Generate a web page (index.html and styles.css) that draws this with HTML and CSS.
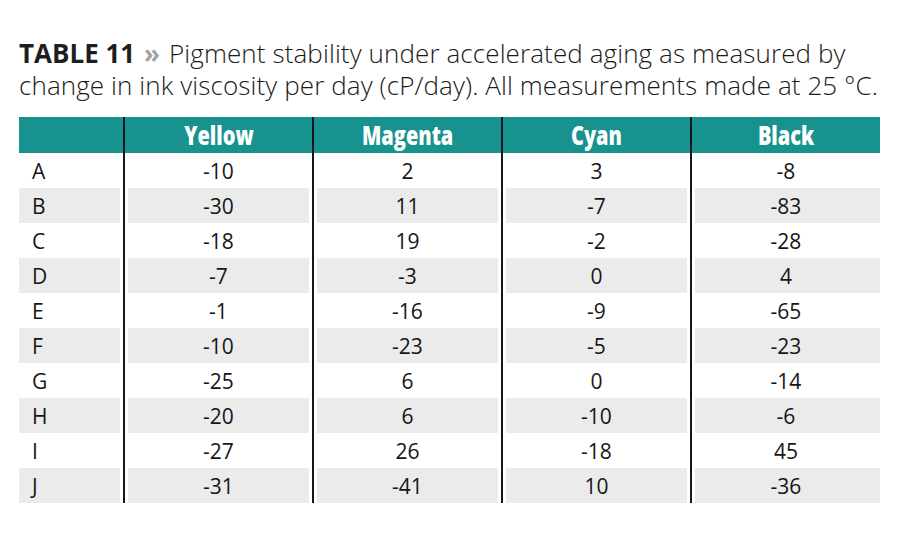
FILE: index.html
```html
<!DOCTYPE html>
<html>
<head>
<meta charset="utf-8">
<link rel="stylesheet" href="styles.css">
</head>
<body>
<div class="page">
  <p class="caption"><span class="label">TABLE 11</span> <span class="chev">»</span> Pigment stability under accelerated aging as measured by change in ink viscosity per day (cP/day). All measurements made at 25 °C.</p>
  <table class="data">
    <thead>
      <tr><th class="c0"></th><th><span class="hd">Yellow</span></th><th><span class="hd">Magenta</span></th><th><span class="hd">Cyan</span></th><th><span class="hd">Black</span></th></tr>
    </thead>
    <tbody>
      <tr><td class="c0">A</td><td>-10</td><td>2</td><td>3</td><td>-8</td></tr>
      <tr class="alt"><td class="c0">B</td><td>-30</td><td>11</td><td>-7</td><td>-83</td></tr>
      <tr><td class="c0">C</td><td>-18</td><td>19</td><td>-2</td><td>-28</td></tr>
      <tr class="alt"><td class="c0">D</td><td>-7</td><td>-3</td><td>0</td><td>4</td></tr>
      <tr><td class="c0">E</td><td>-1</td><td>-16</td><td>-9</td><td>-65</td></tr>
      <tr class="alt"><td class="c0">F</td><td>-10</td><td>-23</td><td>-5</td><td>-23</td></tr>
      <tr><td class="c0">G</td><td>-25</td><td>6</td><td>0</td><td>-14</td></tr>
      <tr class="alt"><td class="c0">H</td><td>-20</td><td>6</td><td>-10</td><td>-6</td></tr>
      <tr><td class="c0">I</td><td>-27</td><td>26</td><td>-18</td><td>45</td></tr>
      <tr class="alt"><td class="c0">J</td><td>-31</td><td>-41</td><td>10</td><td>-36</td></tr>
    </tbody>
  </table>
</div>
</body>
</html>
```
FILE: styles.css
```css
html, body {
  margin: 0;
  padding: 0;
  background: #ffffff;
}
.page {
  padding: 37px 10px 0 19px;
  font-family: "Open Sans", "Liberation Sans", sans-serif;
  color: #2a2a2a;
}
.caption {
  margin: 0 0 16px 0;
  font-size: 26px;
  font-weight: 300;
  line-height: 32px;
  letter-spacing: 0.1px;
  width: 871px;
  color: #1a1a1a;
}
.label {
  font-weight: 700;
  letter-spacing: 0;
  color: #1e1e1e;
}
.chev {
  color: #a3a3a3;
  font-weight: 700;
  margin: 0 2px;
}
.data {
  border-collapse: collapse;
  border-spacing: 0;
  width: 861px;
  table-layout: fixed;
}
.data th, .data td {
  padding: 0;
  text-align: center;
  border-left: 2px solid #15151f;
}
.data .c0 {
  width: 91px;
  border-left: none;
  text-align: left;
  padding-left: 13px;
}
.data th {
  height: 36px;
  background: #17928f;
  color: #ffffff;
  font-family: "Open Sans", sans-serif;
  font-weight: 800;
  font-size: 27px;
  line-height: 36px;
}
.hd {
  display: inline-block;
  transform: scaleX(0.74);
}
.data td {
  height: 35px;
  font-size: 21px;
  color: #161616;
}
.data tr.alt td {
  background: #ebebeb;
  box-shadow: inset 3px 0 0 #ffffff, inset -3px 0 0 #ffffff;
}
.data tr.alt td.c0 {
  box-shadow: inset -3px 0 0 #ffffff;
}
.data tr.alt td:last-child {
  box-shadow: inset 3px 0 0 #ffffff;
}
```
